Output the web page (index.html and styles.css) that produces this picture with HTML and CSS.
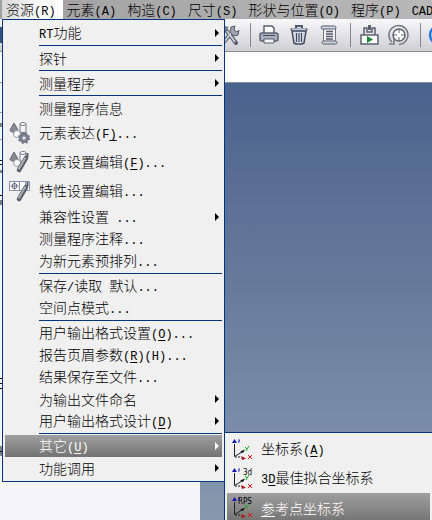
FILE: index.html
```html
<!DOCTYPE html>
<html lang="zh-CN">
<head>
<meta charset="utf-8">
<title>资源</title>
<link rel="stylesheet" href="styles.css">
</head>
<body>
<svg class="defs" aria-hidden="true">
  <symbol id="axes" viewBox="0 0 24 24">
    <path d="M4.500 7V19.500L13 14.500" fill="none" stroke="#222"/>
    <path d="M2 6 4.500 2 7 6z" fill="#1515b0"/>
    <path d="M10 14.500 15 12.500 13 16z" fill="#111"/>
    <path d="M8 3h2L8 5h2" fill="none" stroke="#2a2ad0" stroke-width=".8"/>
    <path d="m15 10 2 2 2-3m-2 3-1 2" fill="none" stroke="#11aa11"/>
    <path d="M5 20h5" stroke="#222" stroke-dasharray="2 1"/>
    <path d="M11 19 16 21.500 12 23z" fill="#b01010"/>
    <path d="m18 18 4 4m0-4-4 4" stroke="#e01818"/>
  </symbol>
  <symbol id="shapes" viewBox="0 0 22 24">
    <path d="M5 2 1 9c0 3 8 3 8 0z" fill="#858a92" stroke="#666b73"/>
    <path d="M11 3v7c0 2 6 2 6 0V3" fill="#f4f4f8" stroke="#777c88"/>
    <ellipse cx="14" cy="3" rx="3" ry="1.500" fill="#fff" stroke="#777c88"/>
    <circle cx="8" cy="13" r="3.500" fill="#fff" stroke="#9095a5"/>
  </symbol>
  <symbol id="stylus" viewBox="0 0 22 24">
    <path d="m10 20 7-12" stroke="#5b6068" stroke-width="4.500" stroke-linecap="round"/>
    <path d="m9.500 19.500 7-12" stroke="#a9adb6" stroke-width="2"/>
    <path d="M18.500 3v4" stroke="#5b6068" stroke-width="2"/>
  </symbol>
</svg>

<div class="app">
  <nav class="menubar">
    <button class="open">资源<i>(R)</i></button><button>元素<i>(A)</i></button><button>构造<i>(C)</i></button><button>尺寸<i>(S)</i></button><button>形状与位置<i>(O)</i></button><button>程序<i>(P)</i></button><button><i>CAD</i></button>
  </nav>

  <div class="toolbar">
    <span class="grip"></span>
    <button aria-label="工具"><svg width="22" height="22" viewBox="0 0 22 22"><path d="m5 19 10-12M8 6l10 13" stroke="#555b68" stroke-width="4" stroke-linecap="round"/><path d="m6 18 8-10M9 7l8 11" stroke="#c8ccd6" stroke-width="2"/><path d="m13 3 4-1-1 4 3 2 2-2-1 5-4 1-4-4z" fill="#a0a5b2" stroke="#555b68"/><path d="m3 6 4-4 4 1-4 5z" fill="#7c818c"/></svg></button>
    <span class="rule"></span>
    <button aria-label="打印"><svg width="20" height="20" viewBox="0 0 20 20"><path d="M5 8V1h8l2 2v5" fill="#fff" stroke="#596173" stroke-width="1.500"/><rect x="1" y="8" width="18" height="8" rx="2" fill="#a9afbd" stroke="#596173" stroke-width="1.500"/><path d="M4 10.500h12" stroke="#454c5c"/><path d="M5 14h10v4H5z" fill="#f5f6fa" stroke="#596173"/></svg></button>
    <button aria-label="删除"><svg width="20" height="20" viewBox="0 0 20 20"><path d="M3 6h14l-2 12-2 1H7l-2-1z" fill="#d8dce6" stroke="#3f4860" stroke-width="1.500"/><path d="M7.500 8v9M10 8v9m2.500-9v9" stroke="#3f4860" stroke-width="1.200"/><path d="M1.500 4.500h17M7 3V1h6v2" fill="none" stroke="#4f5870" stroke-width="2"/><path d="M3 4.500h14" stroke="#c9d2e8"/></svg></button>
    <button aria-label="记录"><svg width="20" height="20" viewBox="0 0 20 20"><path d="M4.500 3h12v14h-12z" fill="#f4f5f9" stroke="#6d7484"/><path d="M7 6.500h7M7 9h7m-7 2.500h7M7 14h7" stroke="#535a6a" stroke-width="1.300"/><rect x="2" y="1" width="15" height="3" rx="1.500" fill="#d4d8e2" stroke="#535a6a"/><rect x="3" y="16" width="15" height="3" rx="1.500" fill="#d4d8e2" stroke="#535a6a"/></svg></button>
    <span class="rule"></span>
    <button aria-label="运行"><svg width="20" height="20" viewBox="0 0 20 20"><path d="M5 11V3h3v4h5V3h3v8" fill="#e4e6ee" stroke="#5b6170" stroke-width="1.500"/><path d="M10.500 0v5" stroke="#5b6170" stroke-width="3"/><path d="M2 10h17v9H2z" fill="#fff" stroke="#5b6170" stroke-width="1.500"/><path d="m8 11 6 3.500L8 18z" fill="#138a2c"/></svg></button>
    <button aria-label="定位"><svg width="22" height="22" viewBox="0 0 22 22"><path d="M4 18a9.500 9.500 0 1 1 7 2.500M1 20h5v-5" fill="none" stroke="#737884" stroke-width="1.500"/><circle cx="11" cy="11" r="6" fill="#fff" stroke="#5d626e" stroke-width="1.500"/><path d="M11 5v4m0 4v4m-6-6h4m4 0h4" stroke="#5d626e"/></svg></button>
    <span class="rule"></span>
    <button aria-label="网络"><svg width="22" height="22" viewBox="0 0 22 22"><circle cx="11" cy="11" r="9" fill="#cfe3fa" stroke="#2277dd" stroke-width="2.500"/><circle cx="11" cy="11" r="5" fill="none" stroke="#2277dd" stroke-width="2"/></svg></button>
  </div>

  <div class="infobar"></div>

  <main class="work">
    <aside class="panel"><svg width="2" height="400" viewBox="0 0 2 400"><path d="M0 56.500h2M0 29.500h2" stroke="#999"/><path d="M1 40v4M0 77.500h2M0 81.500h2M1 87v3M0 112.500h2M1 117v5M0 295.500h2M0 300.500h2M0 305.500h2M1 363v10M0 368.500h2" stroke="#111"/></svg></aside>
    <section class="view"></section>
  </main>
</div>

<div class="menu main-menu" role="menu">
  <button class="item more" role="menuitem"><i>RT</i>功能</button>
  <hr>
  <button class="item more" role="menuitem">探针</button>
  <hr>
  <button class="item more" role="menuitem">测量程序</button>
  <hr>
  <button class="item" role="menuitem">测量程序信息</button>
  <button class="item tall" role="menuitem"><svg class="icon" viewBox="0 0 22 24"><use href="#shapes"/><circle cx="15" cy="17" r="4" fill="#858b9c" stroke="#727889" stroke-width="2"/><circle cx="15" cy="17" r="5" fill="none" stroke="#727889" stroke-width="2" stroke-dasharray="2 2"/><circle cx="15" cy="17" r="1.500" fill="#eee"/></svg>元素表达<i>(F<u>)</u>...</i></button>
  <button class="item tall" role="menuitem"><svg class="icon" viewBox="0 0 22 24"><use href="#shapes"/><use href="#stylus"/></svg>元素设置编辑<i>(<u>F</u>)...</i></button>
  <button class="item tall" role="menuitem"><svg class="icon" viewBox="0 0 22 24"><path d="M.5 2.500h20v9H.5zM10.500 2v10M16.500 2v10" fill="#fafaff" stroke="#8790ad"/><circle cx="5.500" cy="7" r="2.500" fill="none" stroke="#59617a"/><path d="M5.500 3v8m-4-4h8" stroke="#59617a" stroke-width=".7"/><use href="#stylus"/></svg>特性设置编辑<i>...</i></button>
  <button class="item more" role="menuitem">兼容性设置<i> ...</i></button>
  <button class="item" role="menuitem">测量程序注释<i>...</i></button>
  <button class="item" role="menuitem">为新元素预排列<i>...</i></button>
  <hr>
  <button class="item" role="menuitem">保存<i>/</i>读取<i> </i>默认<i>...</i></button>
  <button class="item" role="menuitem">空间点模式<i>...</i></button>
  <hr>
  <button class="item" role="menuitem">用户输出格式设置<i>(<u>O</u>)...</i></button>
  <button class="item" role="menuitem">报告页眉参数<i>(<u>R</u>)(H)...</i></button>
  <button class="item" role="menuitem">结果保存至文件<i>...</i></button>
  <button class="item more" role="menuitem">为输出文件命名</button>
  <button class="item more" role="menuitem">用户输出格式设计<i>(<u>D</u>)</i></button>
  <hr>
  <button class="item more active" role="menuitem">其它<i>(<u>U</u>)</i></button>
  <button class="item more" role="menuitem">功能调用</button>
</div>

<div class="menu sub-menu" role="menu">
  <button class="item tall" role="menuitem"><svg class="icon" viewBox="0 0 24 24"><use href="#axes"/></svg>坐标系<i>(<u>A</u>)</i></button>
  <button class="item tall" role="menuitem"><svg class="icon" viewBox="0 0 24 24"><use href="#axes"/><text x="13" y="9">3d</text></svg><i>3<u>D</u></i>最佳拟合坐标系</button>
  <button class="item tall active" role="menuitem"><svg class="icon" viewBox="0 0 24 24"><use href="#axes"/><text x="8" y="9">RPS</text></svg><u>参</u>考点坐标系</button>
</div>
</body>
</html>
```

FILE: styles.css
```css
* { box-sizing: border-box; }

body {
  margin: 0;
  overflow: hidden;
  font: 300 14px/18px "Noto Sans CJK SC", sans-serif;
  color: #000;
}

button {
  border: 0;
  padding: 0;
  background: none;
  color: inherit;
  font: inherit;
  white-space: pre;
}

i {
  font: normal 12px/18px "Liberation Mono", monospace;
}

u { text-underline-offset: 2px; }

.defs {
  position: absolute;
  width: 0;
  height: 0;
}

.app {
  display: flex;
  flex-direction: column;
  min-height: 100vh;
}

.menubar {
  display: flex;
  height: 19px;
  padding-left: 2px;
  overflow: hidden;
  background: linear-gradient(90deg, #a0a0a0, #b8b8b8);
}

.menubar button {
  flex: none;
  padding: 0 7px 0 4px;
}

.menubar .open { background: linear-gradient(90deg, #d8d8d8, #fff 70%); }

.toolbar {
  display: flex;
  align-items: center;
  height: 33px;
  overflow: hidden;
  background: linear-gradient(#f8f8fa, #cfcfd3);
  border-bottom: 1px solid #8c8c90;
}

.toolbar button {
  display: flex;
  flex: none;
  justify-content: center;
  width: 30px;
}

.grip {
  flex: none;
  width: 2px;
  height: 16px;
  margin-right: 212px;
  background: #3b4f7c;
}

.rule {
  flex: none;
  width: 1px;
  height: 24px;
  margin: 0 3px 0 6px;
  background: #85858b;
}

.infobar {
  height: 31px;
  background: #fff;
  border-bottom: 1px solid #8a9298;
}

.work {
  display: flex;
  flex: 1;
}

.panel {
  width: 200px;
  background: #f5f4f8;
}

.view {
  flex: 1;
  background: linear-gradient(#4a628c, #8798ae);
}

.menu {
  position: absolute;
  display: flex;
  flex-direction: column;
  padding: 2px;
  background: #f0f0f0;
  border: 1px solid #043580;
}

.main-menu {
  top: 19px;
  left: 2px;
  width: 223px;
}

.sub-menu {
  top: 432px;
  left: 224px;
  right: 0;
  border-right: 0;
}

.menu hr {
  width: calc(100% - 34px);
  height: 1px;
  margin: 1px 0 1px 34px;
  border: 0;
  background: #043580;
}

.item {
  position: relative;
  height: 22px;
  padding-left: 34px;
  text-align: left;
}

.tall { height: 29px; }

.active {
  background: linear-gradient(#a09f9f, #747373);
  color: #fff;
}

.more::after {
  content: "";
  position: absolute;
  top: 7px;
  right: 3px;
  border: 4px solid transparent;
  border-right: 0;
  border-left-color: currentColor;
}

.icon {
  position: absolute;
  top: 2px;
  left: 3px;
  width: 24px;
  height: 24px;
}

.icon text {
  font: 8px "Liberation Sans Narrow", "DejaVu Sans Condensed", sans-serif;
  fill: #000;
}
```
